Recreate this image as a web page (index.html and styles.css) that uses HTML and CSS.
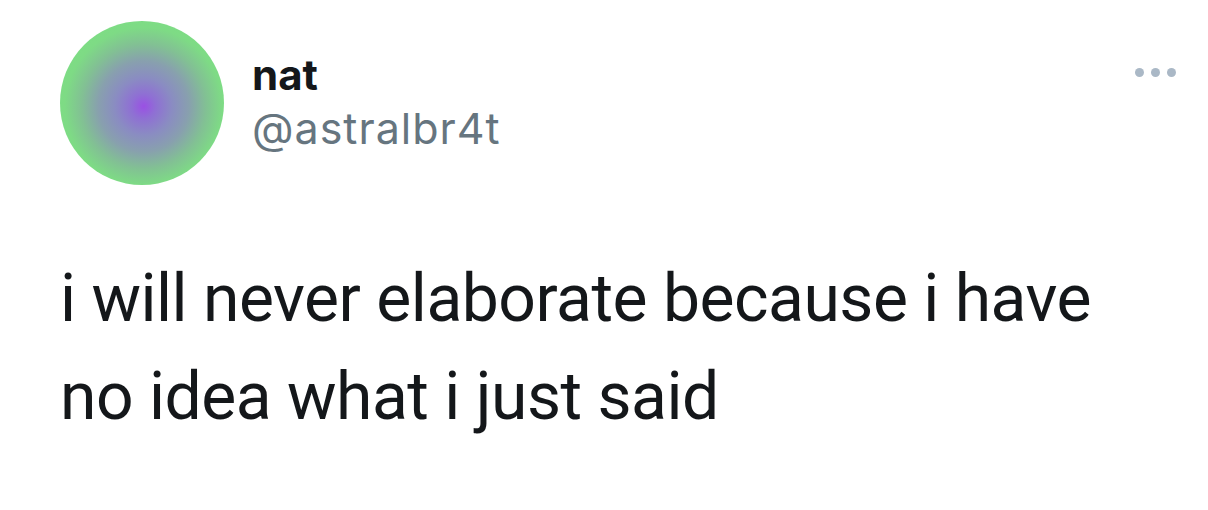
FILE: index.html
```html
<!DOCTYPE html>
<html lang="en">
  <head>
    <meta charset="UTF-8" />
    <meta name="viewport" content="width=device-width, initial-scale=1.0" />
    <title>nat on Twitter</title>
    <link rel="stylesheet" href="styles.css">
  </head>
  <body>
    <article class="tweet">
      <header class="tweet-header">
        <div class="avatar"></div>
        <div class="author">
          <div class="author-name">nat</div>
          <div class="author-handle">@astralbr4t</div>
        </div>
        <div class="more">
          <span class="dot"></span>
          <span class="dot"></span>
          <span class="dot"></span>
        </div>
      </header>
      <p class="tweet-text">i will never elaborate because i have no idea what i just said</p>
    </article>
  </body>
</html>
```

FILE: styles.css
```css
body {
  margin: 0;
  background-color: #ffffff;
  font-family: "Roboto", "Helvetica", "Arial", sans-serif;
  color: #14171a;
}
.tweet {
  padding: 21px 32px 0 60px;
}
.tweet-header {
  display: flex;
  align-items: flex-start;
}
.avatar {
  width: 164px;
  height: 164px;
  border-radius: 50%;
  flex-shrink: 0;
  background: radial-gradient(
    circle at 51% 52%,
    #9a50e4 0%,
    #8f6fd4 10%,
    #8a8cc2 24%,
    #88a0ae 38%,
    #82c094 52%,
    #7edb85 66%,
    #7ce283 100%
  );
}
.author {
  margin-left: 28px;
  padding-top: 29px;
  font-family: "Inter", "Roboto", sans-serif;
}
.author-name {
  font-size: 42px;
  font-weight: 700;
  line-height: 50px;
  color: #14171a;
}
.author-handle {
  font-size: 43px;
  line-height: 56px;
  letter-spacing: 1px;
  color: #66757f;
}
.more {
  margin-left: auto;
  margin-top: 47px;
  display: flex;
  gap: 7px;
}
.dot {
  width: 9px;
  height: 9px;
  border-radius: 50%;
  background-color: #aab8c6;
}
.tweet-text {
  margin: 65px 0 0 0;
  font-size: 66px;
  line-height: 98px;
  letter-spacing: -0.5px;
  max-width: 1060px;
}
```
